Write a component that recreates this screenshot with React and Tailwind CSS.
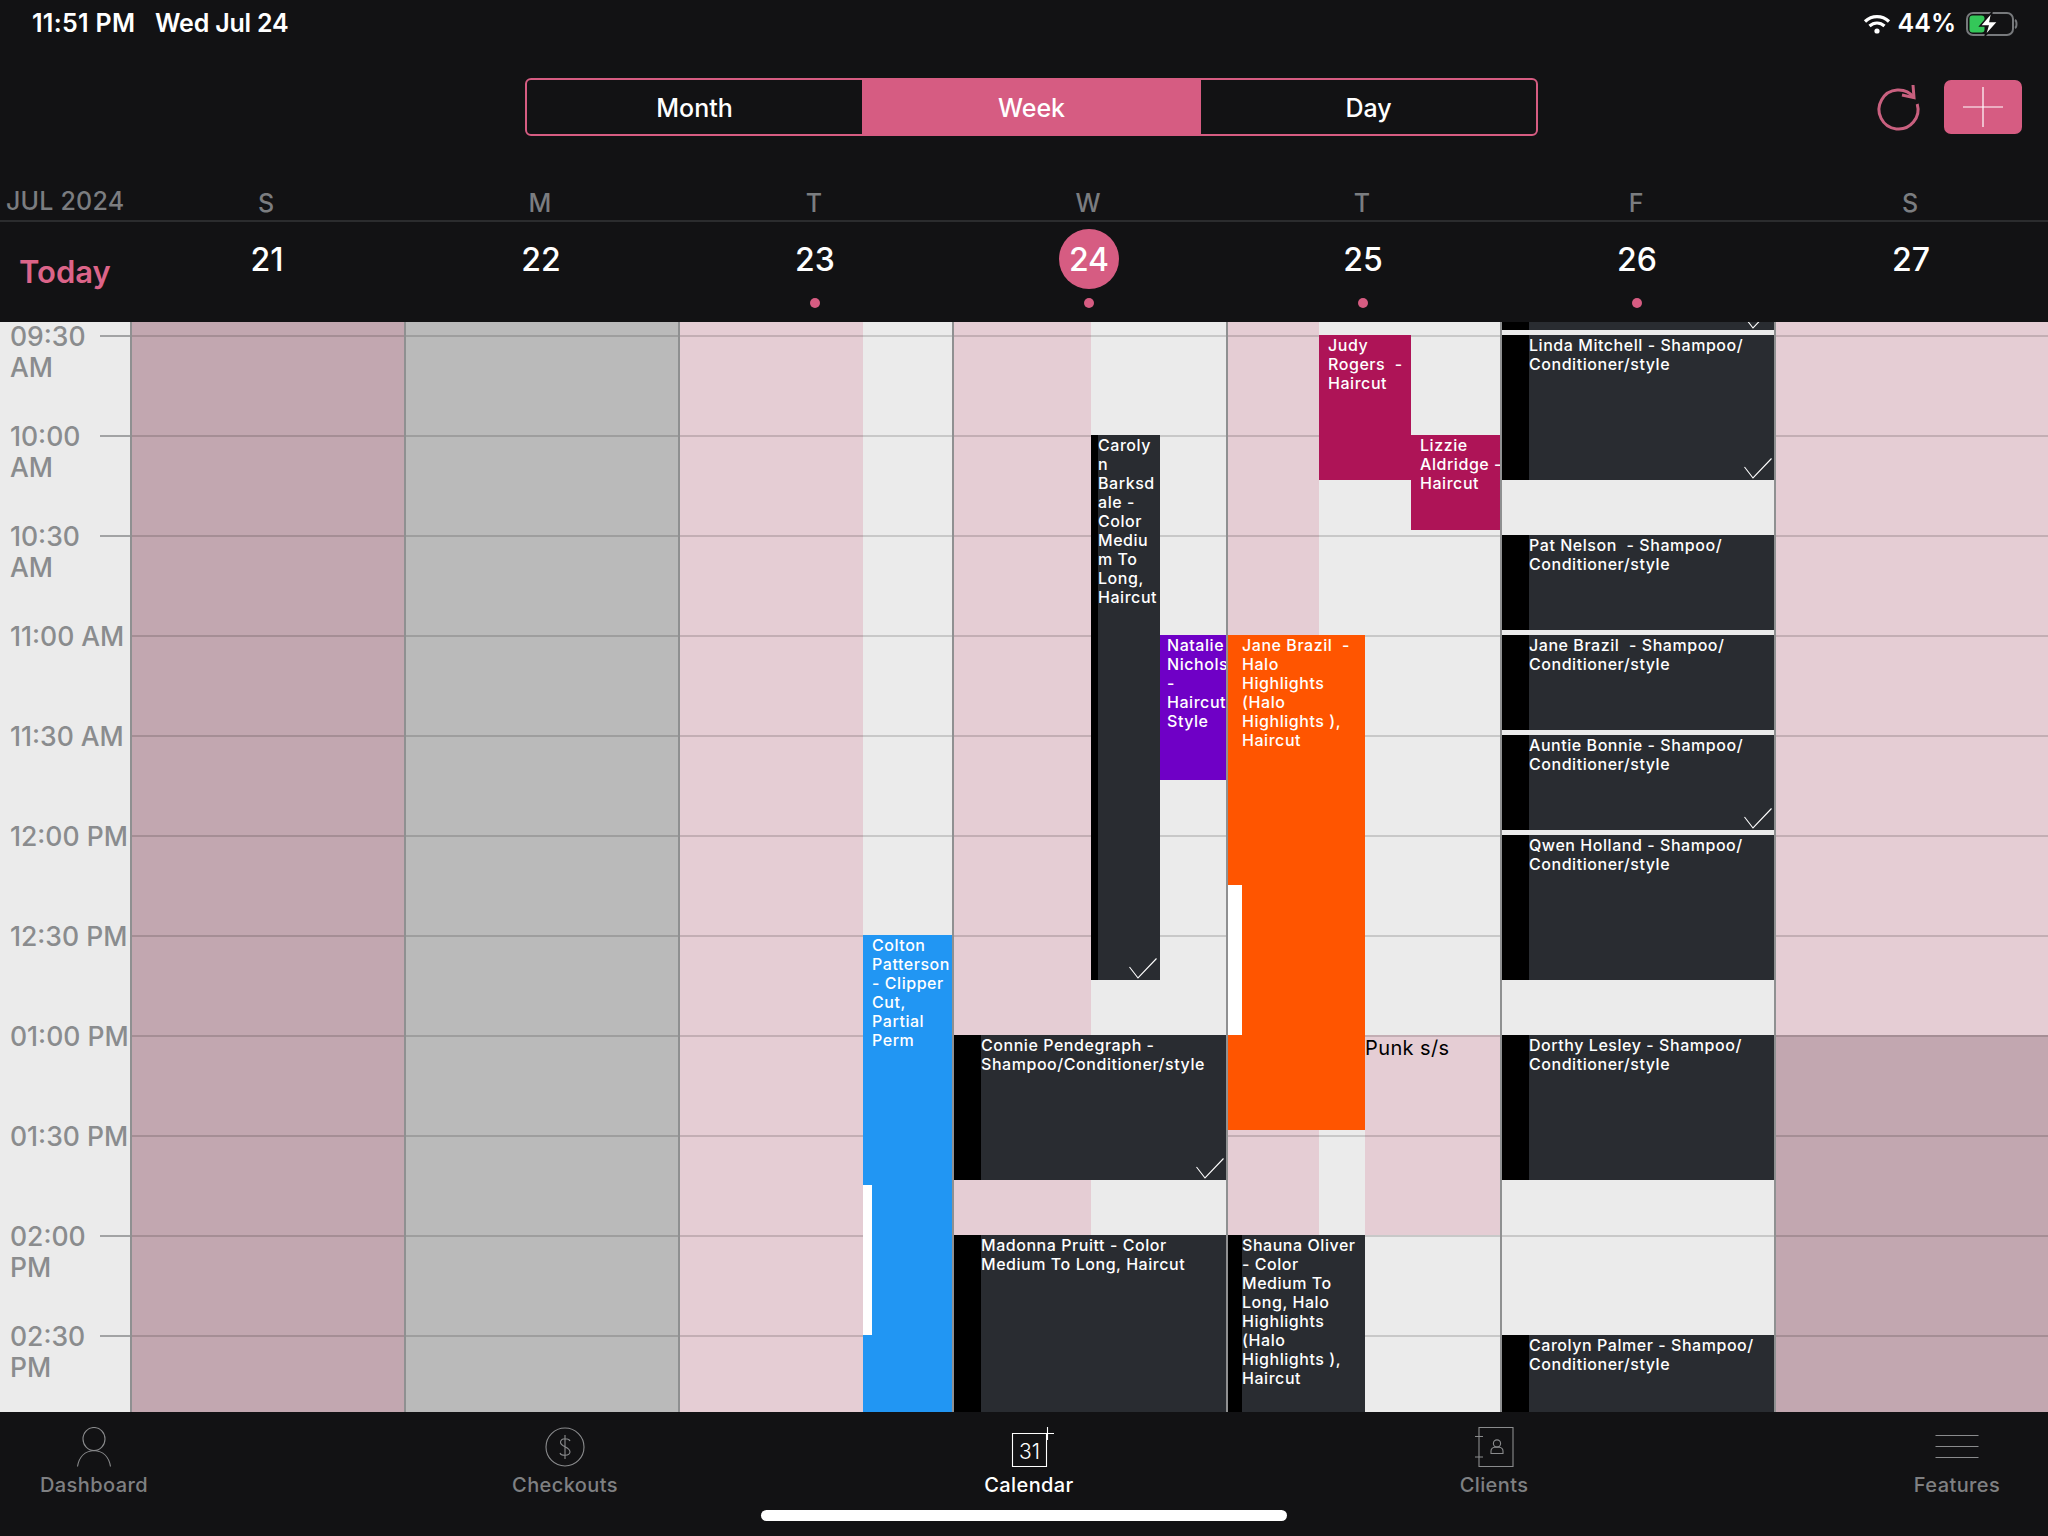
import React from "react";

const FONT = "font-['Inter','Liberation_Sans',sans-serif]";

const days = [
  { letter: "S", num: "21" },
  { letter: "M", num: "22" },
  { letter: "T", num: "23", dot: true },
  { letter: "W", num: "24", dot: true, today: true },
  { letter: "T", num: "25", dot: true },
  { letter: "F", num: "26", dot: true },
  { letter: "S", num: "27" },
];

const times = [
  { lines: ["09:30", "AM"] },
  { lines: ["10:00", "AM"] },
  { lines: ["10:30", "AM"] },
  { lines: ["11:00 AM"] },
  { lines: ["11:30 AM"] },
  { lines: ["12:00 PM"] },
  { lines: ["12:30 PM"] },
  { lines: ["01:00 PM"] },
  { lines: ["01:30 PM"] },
  { lines: ["02:00", "PM"] },
  { lines: ["02:30", "PM"] },
];

const shampoo = ["Shampoo/", "Conditioner/style"];

function Check({ className }) {
  return (
    <svg className={`absolute ${className}`} width="28" height="21" viewBox="0 0 28 21" fill="none" stroke="#fff" strokeWidth="1.1">
      <path d="M0.5 9 L9 20 L27.5 0.5" />
    </svg>
  );
}

function HourLines() {
  return (
    <div className="absolute inset-0 flex flex-col pt-[13px]">
      {times.map((t) => (
        <div key={t.lines[0]} className="h-[100px] shrink-0 border-t-2 border-black/15" />
      ))}
    </div>
  );
}

function Appt({ pos, bg = "bg-[#292c31]", strip = "bg-black", stripW = "w-[27px]", lines, children }) {
  return (
    <div className={`absolute overflow-hidden flex ${pos} ${bg}`}>
      <div className={`shrink-0 h-full ${stripW} ${strip}`} />
      <div className="pt-px text-[16px] leading-[19px] font-medium tracking-[0.55px] text-white whitespace-pre">
        {lines.map((l, i) => (
          <div key={i}>{l}</div>
        ))}
      </div>
      {children}
    </div>
  );
}

function DayCol({ bg, children }) {
  return (
    <div className={`relative w-[274px] shrink-0 h-full border-l-2 border-[#8f9091] ${bg}`}>
      {children}
    </div>
  );
}

function StatusBar() {
  return (
    <div className="h-[46px] flex items-center pt-[1px] pl-[32px] pr-[30px] text-white text-[25px] font-semibold">
      <span className="w-[123px] tracking-[0.3px]">11:51 PM</span>
      <span className="tracking-[-0.2px]">Wed Jul 24</span>
      <svg className="ml-auto" width="28" height="20" viewBox="0 0 28 20" fill="none" stroke="#fff" strokeWidth="3.2">
        <path d="M2 7.5 C9 1 19 1 26 7.5" />
        <path d="M6.5 12 C11 8 17 8 21.5 12" />
        <circle cx="14" cy="17" r="2.6" fill="#fff" stroke="none" />
      </svg>
      <span className="ml-[7px]">44%</span>
      <svg className="ml-[10px]" width="52" height="24" viewBox="0 0 52 24" fill="none">
        <rect x="1" y="1" width="46" height="22" rx="6" stroke="#77797c" strokeWidth="2" />
        <rect x="3.5" y="3.5" width="15" height="17" rx="3" fill="#34c759" />
        <path d="M49 8 C51 9 51 15 49 16" stroke="#77797c" strokeWidth="2" />
        <path d="M26 0 L14 14 H22 L19 24 L32 9.5 H24 Z" fill="#fff" stroke="#121214" strokeWidth="1.5" />
      </svg>
    </div>
  );
}

function Toolbar() {
  return (
    <div className="h-[122px] flex items-center pl-[525px] pr-[26px]">
      <div className="w-[1013px] h-[58px] flex rounded-[6px] border-2 border-[#d65c82] text-white text-[25px] leading-[30px] font-medium overflow-hidden">
        <div className="flex-1 flex items-center justify-center pt-[1px]">Month</div>
        <div className="w-[339px] flex items-center justify-center bg-[#d65c82] pt-[1px]">Week</div>
        <div className="flex-1 flex items-center justify-center pt-[1px]">Day</div>
      </div>
      <svg className="ml-auto mr-[5px] -mt-[4px] overflow-visible" width="42" height="42" viewBox="0 0 42 42" fill="none" stroke="#c9607f" strokeWidth="3">
        <path d="M37 13.7 A19.5 19.5 0 1 0 40.2 20" />
        <path d="M36 1 L37 13.7 L25 11" />
      </svg>
      <div className="ml-[20px] w-[78px] h-[54px] rounded-[7px] bg-[#d65c82] flex items-center justify-center">
        <svg width="42" height="40" viewBox="0 0 42 40" stroke="#fff" strokeWidth="1.2">
          <path d="M1 20 H41 M21 0 V40" />
        </svg>
      </div>
    </div>
  );
}

function WeekHeader() {
  return (
    <>
      <div className="h-[54px] flex items-end border-b-2 border-[#2b2c2e] pb-[2px] text-[25px] leading-[30px] font-medium text-[#7b7d80]">
        <div className="w-[129px] shrink-0 pl-[6px] tracking-[0.2px] mb-[2px]">JUL 2024</div>
        {days.map((d, i) => (
          <div key={i} className="w-[274px] shrink-0 text-center">{d.letter}</div>
        ))}
      </div>
      <div className="h-[100px] flex">
        <div className="w-[130px] shrink-0 pl-[19px] pt-[31px] text-[31px] leading-[38px] font-semibold text-[#dc6489]">Today</div>
        {days.map((d, i) => (
          <div key={i} className="w-[274px] shrink-0 flex flex-col items-center pt-[7px]">
            <div className={`w-[60px] h-[60px] rounded-full flex items-center justify-center pt-[2px] text-[32px] font-medium text-white ${d.today ? "bg-[#d65c82]" : ""}`}>
              {d.num}
            </div>
            {d.dot && <div className="mt-[9px] w-[10px] h-[10px] rounded-full bg-[#d65c82]" />}
          </div>
        ))}
      </div>
    </>
  );
}

function TimeGutter() {
  return (
    <div className="w-[130px] shrink-0 bg-[#ebebeb] flex flex-col text-[#8a8c8e] text-[26.5px] leading-[29px] font-medium">
      {times.map((t) => (
        <div key={t.lines[0]} className="relative h-[100px] shrink-0 pl-[10px] whitespace-nowrap">
          {t.lines.map((l, i) => (
            <div key={l} className={i ? "mt-[2px]" : ""}>{l}</div>
          ))}
          {t.lines.length > 1 && <div className="absolute left-[100px] top-[13px] w-[30px] h-[2px] bg-[#a2a3a4]" />}
        </div>
      ))}
    </div>
  );
}

function CalendarBody() {
  return (
    <div className="h-[1090px] flex overflow-hidden">
      <TimeGutter />

      <DayCol bg="bg-[#c2a7b0]"><HourLines /></DayCol>
      <DayCol bg="bg-[#bababa]"><HourLines /></DayCol>

      <DayCol bg="bg-[#ebebeb]">
        <div className="absolute left-0 top-0 bottom-0 w-[183px] bg-[#e5cdd4]" />
        <HourLines />
        <Appt pos="left-[183px] top-[613px] w-[89px] h-[477px]" bg="bg-[#2196f3]" strip="bg-[#2196f3]" stripW="w-[9px]"
          lines={["Colton", "Patterson", "- Clipper", "Cut,", "Partial", "Perm"]}>
          <div className="absolute left-0 top-[250px] w-[9px] h-[150px] bg-white" />
        </Appt>
      </DayCol>

      <DayCol bg="bg-[#ebebeb]">
        <div className="absolute left-0 top-0 bottom-0 w-[137px] bg-[#e5cdd4]" />
        <HourLines />
        <Appt pos="left-[137px] top-[113px] w-[69px] h-[545px]" stripW="w-[7px]"
          lines={["Caroly", "n", "Barksd", "ale -", "Color", "Mediu", "m To", "Long,", "Haircut"]}>
          <Check className="right-[3px] bottom-[1px]" />
        </Appt>
        <Appt pos="left-[206px] top-[313px] w-[66px] h-[145px]" bg="bg-[#6f00c6]" strip="bg-[#6f00c6]" stripW="w-[7px]"
          lines={["Natalie", "Nichols", "-", "Haircut", "Style"]} />
        <Appt pos="left-0 top-[713px] w-[272px] h-[145px]"
          lines={["Connie Pendegraph -", "Shampoo/Conditioner/style"]}>
          <Check className="right-[2px] bottom-[1px]" />
        </Appt>
        <Appt pos="left-0 top-[913px] w-[272px] h-[177px]"
          lines={["Madonna Pruitt - Color", "Medium To Long, Haircut"]} />
      </DayCol>

      <DayCol bg="bg-[#ebebeb]">
        <div className="absolute left-0 top-0 h-[913px] w-[91px] bg-[#e5cdd4]" />
        <div className="absolute left-[137px] top-[713px] h-[200px] w-[135px] bg-[#e5cdd4]" />
        <HourLines />
        <div className="absolute left-[137px] top-[714px] text-[20px] leading-[24px] text-black tracking-[0.4px]">Punk s/s</div>
        <Appt pos="left-[91px] top-[13px] w-[92px] h-[145px]" bg="bg-[#ae1457]" strip="bg-[#ae1457]" stripW="w-[9px]"
          lines={["Judy", "Rogers  -", "Haircut"]} />
        <Appt pos="left-[183px] top-[113px] w-[89px] h-[95px]" bg="bg-[#ae1457]" strip="bg-[#ae1457]" stripW="w-[9px]"
          lines={["Lizzie", "Aldridge -", "Haircut"]} />
        <Appt pos="left-0 top-[313px] w-[137px] h-[495px]" bg="bg-[#ff5500]" strip="bg-[#ff5500]" stripW="w-[14px]"
          lines={["Jane Brazil  -", "Halo", "Highlights", "(Halo", "Highlights ),", "Haircut"]}>
          <div className="absolute left-0 top-[250px] w-[14px] h-[150px] bg-white" />
        </Appt>
        <Appt pos="left-0 top-[913px] w-[137px] h-[177px]" stripW="w-[14px]"
          lines={["Shauna Oliver", "- Color", "Medium To", "Long, Halo", "Highlights", "(Halo", "Highlights ),", "Haircut"]} />
      </DayCol>

      <DayCol bg="bg-[#ebebeb]">
        <HourLines />
        <Appt pos="left-0 -top-[137px] w-[272px] h-[145px]" lines={[""]}>
          <Check className="right-[2px] bottom-[1px]" />
        </Appt>
        <Appt pos="left-0 top-[13px] w-[272px] h-[145px]" lines={["Linda Mitchell - " + shampoo[0], shampoo[1]]}>
          <Check className="right-[2px] bottom-[1px]" />
        </Appt>
        <Appt pos="left-0 top-[213px] w-[272px] h-[95px]" lines={["Pat Nelson  - " + shampoo[0], shampoo[1]]} />
        <Appt pos="left-0 top-[313px] w-[272px] h-[95px]" lines={["Jane Brazil  - " + shampoo[0], shampoo[1]]} />
        <Appt pos="left-0 top-[413px] w-[272px] h-[95px]" lines={["Auntie Bonnie - " + shampoo[0], shampoo[1]]}>
          <Check className="right-[2px] bottom-[1px]" />
        </Appt>
        <Appt pos="left-0 top-[513px] w-[272px] h-[145px]" lines={["Qwen Holland - " + shampoo[0], shampoo[1]]} />
        <Appt pos="left-0 top-[713px] w-[272px] h-[145px]" lines={["Dorthy Lesley - " + shampoo[0], shampoo[1]]} />
        <Appt pos="left-0 top-[1013px] w-[272px] h-[77px]" lines={["Carolyn Palmer - " + shampoo[0], shampoo[1]]} />
      </DayCol>

      <DayCol bg="bg-[#e5cdd4]">
        <div className="absolute left-0 right-0 top-[713px] bottom-0 bg-[#c2a7b0]" />
        <HourLines />
      </DayCol>
    </div>
  );
}

function NavItem({ label, active, extra = "", children }) {
  return (
    <div className={`relative w-[120px] shrink-0 h-full flex flex-col items-center ${extra}`}>
      <div className="h-[40px] mt-[15px] flex items-end justify-center">{children}</div>
      <div className={`mt-[6px] text-[20px] leading-[24px] font-medium tracking-[0.4px] whitespace-nowrap ${active ? "text-white" : "text-[#7f8082]"}`}>{label}</div>
    </div>
  );
}

function BottomNav() {
  return (
    <div className="relative h-[124px] bg-[#121214] flex pl-[34px] gap-[344px]">
      <NavItem label="Dashboard" extra="mr-[7px]">
        <svg width="36" height="40" viewBox="0 0 36 40" fill="none" stroke="#8a8b8d" strokeWidth="1.1">
          <ellipse cx="18" cy="12" rx="11" ry="11.5" />
          <path d="M1.5 39.5 C3 30 9 24 18 23.5 C27 24 33 30 34.5 39.5" />
        </svg>
      </NavItem>
      <NavItem label="Checkouts">
        <svg width="40" height="40" viewBox="0 0 40 40" fill="none" stroke="#8a8b8d" strokeWidth="1.1">
          <circle cx="20" cy="20" r="19" />
          <path d="M25 14 C24 11 16 10.5 15.5 15 C15 20 25 19.5 25 25 C24.5 29.5 16 29 15 26 M20 8 V32" />
        </svg>
      </NavItem>
      <NavItem label="Calendar" active>
        <svg className="overflow-visible ml-[3px]" width="40" height="40" viewBox="0 0 40 40" fill="none" stroke="#fff" strokeWidth="1.1">
          <path d="M1.5 6.5 H35.5 V39.5 H1.5 Z" />
          <path d="M29 6.5 H43 M36.5 0 V13" />
          <text x="18.5" y="31.5" textAnchor="middle" fontSize="21" fontWeight="300" fill="#fff" stroke="none" fontFamily="Inter, sans-serif">31</text>
        </svg>
      </NavItem>
      <NavItem label="Clients" extra="pl-[2px]">
        <svg width="40" height="40" viewBox="0 0 40 40" fill="none" stroke="#8a8b8d" strokeWidth="1.1">
          <path d="M5 0.5 H39 V39.5 H5 Z" />
          <path d="M1 9.5 H9 M1 30 H9" />
          <circle cx="23" cy="16.5" r="3.6" />
          <path d="M17 26.5 V24 C17 21.5 19.5 20 23 20 C26.5 20 29 21.5 29 24 V26.5 Z" />
        </svg>
      </NavItem>
      <NavItem label="Features">
        <svg width="44" height="40" viewBox="0 0 44 40" fill="none" stroke="#8a8b8d" strokeWidth="1.1">
          <path d="M0.5 8.5 H43.5 M0.5 19.5 H43.5 M0.5 30.5 H43.5" />
        </svg>
      </NavItem>
      <div className="absolute left-[761px] top-[98px] w-[526px] h-[11px] rounded-full bg-white" />
    </div>
  );
}

export default function App() {
  return (
    <div className={`w-[2048px] h-[1536px] overflow-hidden bg-[#121214] ${FONT}`}>
      <div className="h-[322px]">
        <StatusBar />
        <Toolbar />
        <WeekHeader />
      </div>
      <CalendarBody />
      <BottomNav />
    </div>
  );
}
